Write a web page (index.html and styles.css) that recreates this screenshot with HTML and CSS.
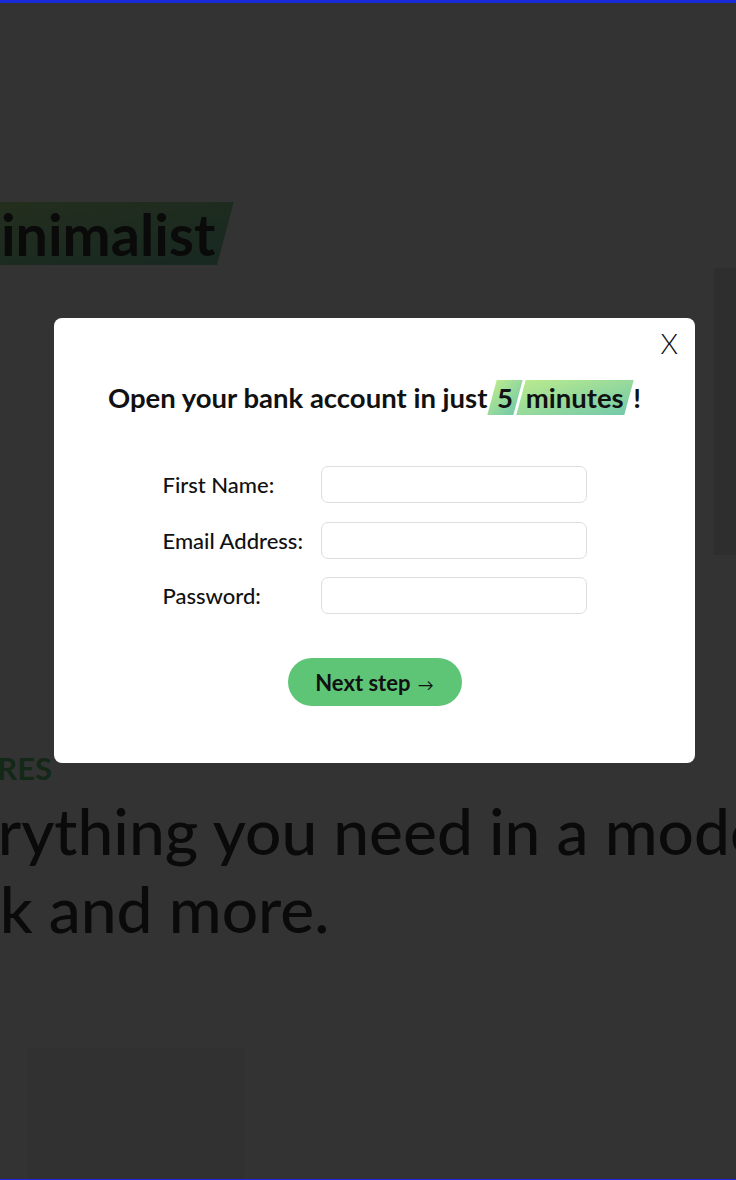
FILE: index.html
```html
<!DOCTYPE html>
<html lang="en">
<head>
<meta charset="utf-8">
<title>Bankist</title>
<link rel="stylesheet" href="styles.css">
</head>
<body>
<div class="page">
  <header class="hero">
    <h1 class="hero-title"><span class="hero-mark">Minimalist</span></h1>
    <div class="hero-img"></div>
  </header>
  <section class="features">
    <h2 class="section-tag">Features</h2>
    <h3 class="section-title">Everything you need in a modern<br>bank and more.</h3>
    <div class="feature-card"></div>
  </section>
</div>

<div class="overlay"></div>

<div class="modal">
  <button class="close-btn" type="button">X</button>
  <h2 class="modal-title">Open your bank account in just <span class="highlight">5</span> <span class="highlight">minutes</span> !</h2>
  <form class="modal-form">
    <label class="field-label" for="fname">First Name:</label>
    <input class="field-input" id="fname" type="text">
    <label class="field-label" for="email">Email Address:</label>
    <input class="field-input" id="email" type="email">
    <label class="field-label" for="pass">Password:</label>
    <input class="field-input" id="pass" type="password">
    <button class="next-btn" type="button">Next step <span class="arrow">&rarr;</span></button>
  </form>
</div>
</body>
</html>
```

FILE: styles.css
```css
* { box-sizing: border-box; }

html, body {
  margin: 0;
  padding: 0;
}

body {
  width: 736px;
  height: 1180px;
  overflow: hidden;
  background: #fff;
  font-family: "Lato", "Noto Sans", sans-serif;
  color: #333;
}

.page {
  width: 736px;
  overflow: hidden;
}

/* hero */
.hero {
  display: flex;
  flex-direction: column;
  padding-top: 202px;
}

.hero-title {
  margin: 0 0 0 -53px;
  font-size: 57.5px;
  font-weight: 700;
  line-height: 63px;
  color: #333;
}

.hero-mark {
  position: relative;
  display: inline-block;
  z-index: 0;
}

.hero-mark::after {
  content: "";
  position: absolute;
  left: -30px;
  right: -2px;
  top: 0;
  bottom: 0;
  z-index: -1;
  transform: skewX(-15deg);
  transform-origin: bottom;
  background-image: linear-gradient(to top left, #39b385, #9be15d);
  opacity: 0.7;
}

.hero-img {
  align-self: flex-end;
  width: 22px;
  height: 287px;
  margin-top: 3px;
  background: #e6e6e6;
}

/* features */
.features {
  padding-top: 198px;
}

.section-tag {
  margin: 0 0 0 -99px;
  font-size: 31px;
  font-weight: 700;
  line-height: 30px;
  text-transform: uppercase;
  color: #5ec576;
}

.section-title {
  margin: 9px 0 0 -104px;
  font-size: 64px;
  font-weight: 500;
  line-height: 78px;
  white-space: nowrap;
  color: #333;
}

.feature-card {
  width: 218px;
  height: 160px;
  margin: 100px 0 0 27px;
  background: #f5f5f5;
}

/* overlay */
.overlay {
  position: fixed;
  inset: 0;
  background: rgba(0, 0, 0, 0.8);
  border-top: 3px solid #1a2ad6;
  border-bottom: 1px solid #1a2ad6;
}

/* modal */
.modal {
  position: fixed;
  top: 318px;
  left: 54px;
  width: 641px;
  height: 445px;
  background: #fff;
  border-radius: 8px;
  padding-top: 61px;
  display: flex;
  flex-direction: column;
  align-items: center;
}

.close-btn {
  position: absolute;
  top: 8px;
  right: 17px;
  padding: 0;
  border: none;
  background: none;
  font-family: "Lato", sans-serif;
  font-size: 28px;
  font-weight: 300;
  line-height: 34px;
  color: #111;
  cursor: pointer;
}

.modal-title {
  margin: 0;
  font-size: 27.5px;
  font-weight: 700;
  line-height: 37px;
  color: #111;
  white-space: nowrap;
}

.highlight {
  position: relative;
  z-index: 0;
  margin: 0 3px;
}

.highlight::after {
  content: "";
  position: absolute;
  left: -5px;
  right: -5px;
  top: -1px;
  bottom: -1px;
  z-index: -1;
  opacity: 0.7;
  transform: skewX(-15deg);
  background-image: linear-gradient(to top left, #39b385, #9be15d);
}

.modal-form {
  margin-top: 50px;
  display: grid;
  grid-template-columns: 133px 266px;
  column-gap: 25px;
  row-gap: 18.5px;
  align-items: center;
}

.field-label {
  font-size: 22px;
  font-weight: 500;
  color: #111;
  white-space: nowrap;
}

.field-input {
  height: 37px;
  width: 266px;
  border: 1px solid #ddd;
  border-radius: 7px;
  padding: 0 14px;
  font-family: inherit;
  font-size: 17px;
  background: #fff;
}

.next-btn {
  grid-column: 1 / span 2;
  justify-self: center;
  margin-top: 25.5px;
  width: 174px;
  height: 48px;
  border: none;
  border-radius: 24px;
  background: #5ec576;
  font-family: inherit;
  font-size: 22px;
  font-weight: 700;
  color: #111;
  cursor: pointer;
}

.arrow {
  font-weight: 400;
  font-size: 16px;
  margin-left: 2px;
}
```
